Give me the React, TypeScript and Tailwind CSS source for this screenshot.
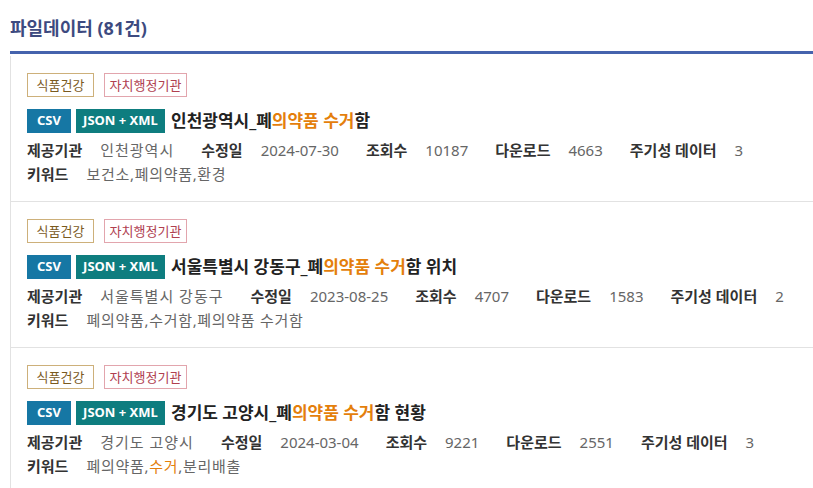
import React from 'react';

// 파일데이터 목록 (검색 결과)

type Part = { t: string; hl?: boolean };

interface FileItem {
  title: Part[];
  org: string;
  updated: string;
  views: string;
  downloads: string;
  cycle: string;
  keywords: Part[];
}

const items: FileItem[] = [
  {
    title: [{ t: '인천광역시_폐' }, { t: '의약품 수거', hl: true }, { t: '함' }],
    org: '인천광역시',
    updated: '2024-07-30',
    views: '10187',
    downloads: '4663',
    cycle: '3',
    keywords: [{ t: '보건소,폐의약품,환경' }],
  },
  {
    title: [{ t: '서울특별시 강동구_폐' }, { t: '의약품 수거', hl: true }, { t: '함 위치' }],
    org: '서울특별시 강동구',
    updated: '2023-08-25',
    views: '4707',
    downloads: '1583',
    cycle: '2',
    keywords: [{ t: '폐의약품,수거함,폐의약품 수거함' }],
  },
  {
    title: [{ t: '경기도 고양시_폐' }, { t: '의약품 수거', hl: true }, { t: '함 현황' }],
    org: '경기도 고양시',
    updated: '2024-03-04',
    views: '9221',
    downloads: '2551',
    cycle: '3',
    keywords: [{ t: '폐의약품,' }, { t: '수거', hl: true }, { t: ',분리배출' }],
  },
];

function Parts({ parts }: { parts: Part[] }) {
  return (
    <>
      {parts.map((p, i) =>
        p.hl ? (
          <span key={i} className="text-[#e47f0c]">
            {p.t}
          </span>
        ) : (
          <span key={i}>{p.t}</span>
        )
      )}
    </>
  );
}

function Meta({ label, value, wide }: { label: string; value: string; wide?: boolean }) {
  return (
    <span className="flex items-center mr-[27px]">
      <span className="font-bold text-[#333]">{label}</span>
      <span className={wide ? 'ml-[18px] tracking-[1px] text-[#666]' : 'ml-[18px] text-[#666]'}>
        {value}
      </span>
    </span>
  );
}

function Row({ item }: { item: FileItem }) {
  return (
    <li className="border-b border-[#e2e2e2] pl-[16px] pt-[17px] pb-[15px]">
      {/* 분류 태그 */}
      <div className="flex gap-[10px] text-[13px] leading-[22px]">
        <span className="w-[67px] border border-[#cdb07a] text-center text-[#7a5a1e]">
          식품건강
        </span>
        <span className="w-[83px] border border-[#e2a5ad] text-center text-[#b0404f]">
          자치행정기관
        </span>
      </div>

      {/* 포맷 + 제목 */}
      <div className="mt-[12px] flex h-[24px] items-center">
        <span className="flex h-[24px] w-[44px] items-center justify-center bg-[#1677a4] text-[13px] font-bold text-white">
          CSV
        </span>
        <span className="ml-[5px] flex h-[24px] w-[89px] items-center justify-center bg-[#0e7d7f] text-[13px] font-bold text-white">
          JSON + XML
        </span>
        <span className="ml-[6px] text-[17px] font-bold leading-[24px] text-[#222]">
          <Parts parts={item.title} />
        </span>
      </div>

      {/* 메타 정보 */}
      <div className="mt-[5px] flex text-[15px] leading-[24px]">
        <Meta label="제공기관" value={item.org} wide />
        <Meta label="수정일" value={item.updated} />
        <Meta label="조회수" value={item.views} />
        <Meta label="다운로드" value={item.downloads} />
        <Meta label="주기성 데이터" value={item.cycle} />
      </div>
      <div className="flex text-[15px] leading-[24px]">
        <span className="font-bold text-[#333]">키워드</span>
        <span className="ml-[18px] tracking-[0.7px] text-[#666]">
          <Parts parts={item.keywords} />
        </span>
      </div>
    </li>
  );
}

export default function App() {
  return (
    <div
      className="h-[488px] w-[813px] overflow-hidden bg-white"
      style={{ fontFamily: '"Noto Sans", "Noto Sans CJK KR", sans-serif' }}
    >
      <div className="ml-[10px]">
        <h2 className="border-b-[3px] border-[#4563ad] pt-[16px] pb-[11px] text-[18px] font-bold leading-[24px] text-[#3d4a80]">
          파일데이터 (81건)
        </h2>
        <ul className="mt-[2px] border-l border-[#e2e2e2]">
          {items.map((it, i) => (
            <Row key={i} item={it} />
          ))}
        </ul>
      </div>
    </div>
  );
}
